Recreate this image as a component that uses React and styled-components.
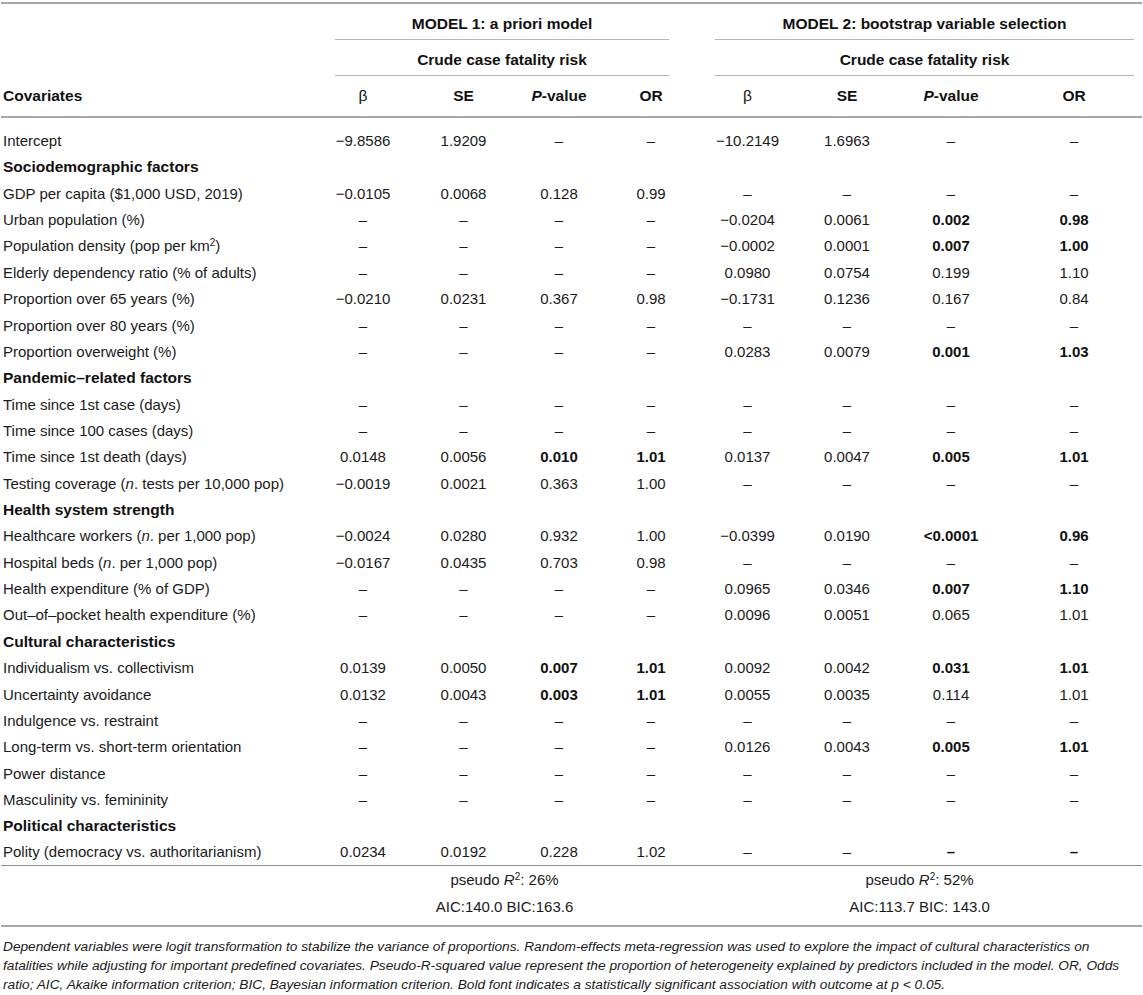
import styled, { createGlobalStyle } from "styled-components";

const GlobalStyle = createGlobalStyle`
  html, body {
    margin: 0;
    padding: 0;
    background: #ffffff;
  }
  body {
    font-family: "Liberation Sans", Arial, sans-serif;
    color: #1a1a1a;
  }
`;

const Page = styled.div`
  width: 1141px;
  padding: 2px 1px 0 1px;
`;

const Table = styled.table`
  width: 1141px;
  table-layout: fixed;
  border-collapse: collapse;
  border-top: 2px solid #a8a8a8;
  font-size: 15px;
  line-height: 16px;
`;

const HeadCell = styled.th`
  padding: 12px 0 0;
  font-weight: bold;
  font-size: 15.5px;
  text-align: ${({ $left }) => ($left ? "left" : "center")};
  padding-left: ${({ $left }) => ($left ? "2px" : "0")};
  color: #111;
  vertical-align: bottom;
`;

const SpanLabel = styled.div`
  padding-bottom: 7px;
  margin: 0 ${({ $right }) => $right}px 0 ${({ $leftGap }) => $leftGap}px;
  border-bottom: 1px solid #b4b4b4;
`;

const ColumnHead = styled(HeadCell)`
  padding-bottom: 12px;
  border-bottom: 2px solid #a8a8a8;
  font-weight: ${({ $plain }) => ($plain ? "normal" : "bold")};
`;

const Row = styled.tr`
  height: ${({ $first }) => ($first ? "37px" : "26.37px")};
`;

const Label = styled.td`
  padding: 0 0 5px 2px;
  text-align: left;
  vertical-align: bottom;
  font-weight: ${({ $section }) => ($section ? "bold" : "normal")};
  font-size: ${({ $section }) => ($section ? "15.5px" : "15px")};
  color: ${({ $section }) => ($section ? "#111" : "#1a1a1a")};
  white-space: nowrap;
`;

const Value = styled.td`
  padding: 0 0 5px;
  text-align: center;
  vertical-align: bottom;
  font-weight: ${({ $bold }) => ($bold ? "bold" : "normal")};
  color: ${({ $bold }) => ($bold ? "#111" : "#1a1a1a")};
  white-space: nowrap;
`;

const StatRow = styled.tr`
  height: ${({ $last }) => ($last ? "33px" : "27px")};
  border-top: ${({ $top }) => ($top ? "1px solid #8c8c8c" : "none")};
  border-bottom: ${({ $last }) => ($last ? "2px solid #a8a8a8" : "none")};
`;

const StatCell = styled.td`
  text-align: center;
  vertical-align: top;
  padding: 6px 0 0;
  color: #1a1a1a;
  white-space: nowrap;
`;

const Footnote = styled.p`
  margin: 10px 0 0;
  padding: 0 2px;
  font-size: 13.7px;
  line-height: 19px;
  font-style: italic;
  color: #1a1a1a;
`;

const Sup = styled.sup`
  font-size: 10px;
  line-height: 0;
  vertical-align: 5px;
`;

const I = styled.i`
  font-style: italic;
`;

const widths = [311, 102, 99, 92, 92, 101, 98, 110, 136];

const D = "–";
const dashes = [D, D, D, D];

// v: eight values (model 1 then model 2), b: indexes shown in bold
const rows = [
  { label: "Intercept", v: ["−9.8586", "1.9209", D, D, "−10.2149", "1.6963", D, D] },
  { section: "Sociodemographic factors" },
  { label: "GDP per capita ($1,000 USD, 2019)", v: ["−0.0105", "0.0068", "0.128", "0.99", ...dashes] },
  { label: "Urban population (%)", v: [...dashes, "−0.0204", "0.0061", "0.002", "0.98"], b: [6, 7] },
  {
    label: (
      <>
        Population density (pop per km<Sup>2</Sup>)
      </>
    ),
    v: [...dashes, "−0.0002", "0.0001", "0.007", "1.00"],
    b: [6, 7],
  },
  { label: "Elderly dependency ratio (% of adults)", v: [...dashes, "0.0980", "0.0754", "0.199", "1.10"] },
  { label: "Proportion over 65 years (%)", v: ["−0.0210", "0.0231", "0.367", "0.98", "−0.1731", "0.1236", "0.167", "0.84"] },
  { label: "Proportion over 80 years (%)", v: [...dashes, ...dashes] },
  { label: "Proportion overweight (%)", v: [...dashes, "0.0283", "0.0079", "0.001", "1.03"], b: [6, 7] },
  { section: "Pandemic–related factors" },
  { label: "Time since 1st case (days)", v: [...dashes, ...dashes] },
  { label: "Time since 100 cases (days)", v: [...dashes, ...dashes] },
  { label: "Time since 1st death (days)", v: ["0.0148", "0.0056", "0.010", "1.01", "0.0137", "0.0047", "0.005", "1.01"], b: [2, 3, 6, 7] },
  {
    label: (
      <>
        Testing coverage (<I>n</I>. tests per 10,000 pop)
      </>
    ),
    v: ["−0.0019", "0.0021", "0.363", "1.00", ...dashes],
  },
  { section: "Health system strength" },
  {
    label: (
      <>
        Healthcare workers (<I>n</I>. per 1,000 pop)
      </>
    ),
    v: ["−0.0024", "0.0280", "0.932", "1.00", "−0.0399", "0.0190", "<0.0001", "0.96"],
    b: [6, 7],
  },
  {
    label: (
      <>
        Hospital beds (<I>n</I>. per 1,000 pop)
      </>
    ),
    v: ["−0.0167", "0.0435", "0.703", "0.98", ...dashes],
  },
  { label: "Health expenditure (% of GDP)", v: [...dashes, "0.0965", "0.0346", "0.007", "1.10"], b: [6, 7] },
  { label: "Out–of–pocket health expenditure (%)", v: [...dashes, "0.0096", "0.0051", "0.065", "1.01"] },
  { section: "Cultural characteristics" },
  { label: "Individualism vs. collectivism", v: ["0.0139", "0.0050", "0.007", "1.01", "0.0092", "0.0042", "0.031", "1.01"], b: [2, 3, 6, 7] },
  { label: "Uncertainty avoidance", v: ["0.0132", "0.0043", "0.003", "1.01", "0.0055", "0.0035", "0.114", "1.01"], b: [2, 3] },
  { label: "Indulgence vs. restraint", v: [...dashes, ...dashes] },
  { label: "Long-term vs. short-term orientation", v: [...dashes, "0.0126", "0.0043", "0.005", "1.01"], b: [6, 7] },
  { label: "Power distance", v: [...dashes, ...dashes] },
  { label: "Masculinity vs. femininity", v: [...dashes, ...dashes] },
  { section: "Political characteristics" },
  { label: "Polity (democracy vs. authoritarianism)", v: ["0.0234", "0.0192", "0.228", "1.02", D, D, D, D], b: [6, 7] },
];

const App = () => {
  return (
    <Page>
      <GlobalStyle />
      <Table>
        <colgroup>
          {widths.map((w, i) => (
            <col key={i} style={{ width: w }} />
          ))}
        </colgroup>
        <thead>
          <tr>
            <HeadCell />
            <HeadCell colSpan={4}>
              <SpanLabel $leftGap={23} $right={28}>MODEL 1: a priori model</SpanLabel>
            </HeadCell>
            <HeadCell colSpan={4}>
              <SpanLabel $leftGap={18} $right={8}>MODEL 2: bootstrap variable selection</SpanLabel>
            </HeadCell>
          </tr>
          <tr>
            <HeadCell />
            <HeadCell colSpan={4}>
              <SpanLabel $leftGap={23} $right={28}>Crude case fatality risk</SpanLabel>
            </HeadCell>
            <HeadCell colSpan={4}>
              <SpanLabel $leftGap={18} $right={8}>Crude case fatality risk</SpanLabel>
            </HeadCell>
          </tr>
          <tr>
            <ColumnHead $left>Covariates</ColumnHead>
            {[0, 1].map((m) => [
              <ColumnHead key={`b${m}`} $plain>β</ColumnHead>,
              <ColumnHead key={`s${m}`}>SE</ColumnHead>,
              <ColumnHead key={`p${m}`}>
                <I>P</I>-value
              </ColumnHead>,
              <ColumnHead key={`o${m}`}>OR</ColumnHead>,
            ])}
          </tr>
        </thead>
        <tbody>
          {rows.map((r, i) =>
            r.section ? (
              <Row key={i}>
                <Label $section>{r.section}</Label>
                <Value colSpan={8} />
              </Row>
            ) : (
              <Row key={i} $first={i === 0}>
                <Label>{r.label}</Label>
                {r.v.map((val, j) => (
                  <Value key={j} $bold={r.b && r.b.includes(j)}>
                    {val}
                  </Value>
                ))}
              </Row>
            )
          )}
          <StatRow $top>
            <StatCell />
            <StatCell colSpan={4}>
              pseudo <I>R</I>
              <Sup>2</Sup>: 26%
            </StatCell>
            <StatCell colSpan={4}>
              pseudo <I>R</I>
              <Sup>2</Sup>: 52%
            </StatCell>
          </StatRow>
          <StatRow $last>
            <StatCell />
            <StatCell colSpan={4}>AIC:140.0 BIC:163.6</StatCell>
            <StatCell colSpan={4}>AIC:113.7 BIC: 143.0</StatCell>
          </StatRow>
        </tbody>
      </Table>
      <Footnote>
        Dependent variables were logit transformation to stabilize the variance of proportions. Random-effects
        meta-regression was used to explore the impact of cultural characteristics on fatalities while adjusting
        for important predefined covariates. Pseudo-R-squared value represent the proportion of heterogeneity
        explained by predictors included in the model. OR, Odds ratio; AIC, Akaike information criterion; BIC,
        Bayesian information criterion. Bold font indicates a statistically significant association with outcome
        at p &lt; 0.05.
      </Footnote>
    </Page>
  );
};

export default App;
